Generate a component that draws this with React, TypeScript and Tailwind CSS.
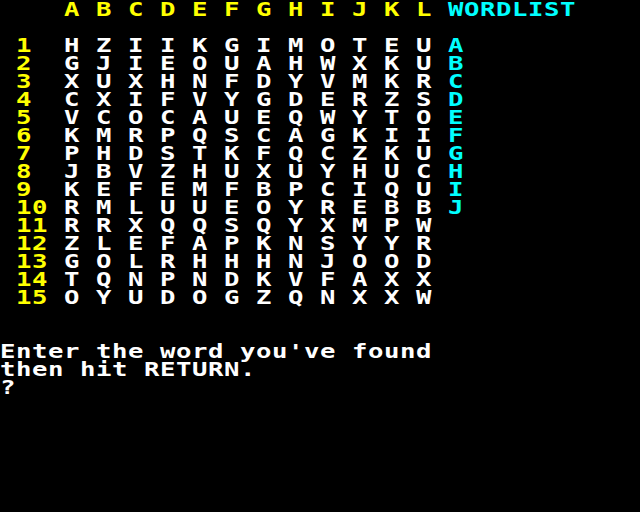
import React from "react";

const grid: string[] = [
  "HZIIKGIMOTEU",
  "GJIEOUAHWXKU",
  "XUXHNFDYVMKR",
  "CXIFVYGDERZS",
  "VCOCAUEQWYTO",
  "KMRPQSCAGKII",
  "PHDSTKFQCZKU",
  "JBVZHUXUYHUC",
  "KEFEMFBPCIQU",
  "RMLUUEOYREBB",
  "RRXQQSQYXMPW",
  "ZLEFAPKNSYYR",
  "GOLRHHHNJOOD",
  "TQNPNDKVFAXX",
  "OYUDOGZQNXXW",
];
const words = "ABCDEFGHIJ";

type Seg = { text: string; color: "y" | "c" | "w" };

const colorClass: Record<string, string> = {
  y: "text-[#ffff00]",
  c: "text-[#00ffff]",
  w: "text-[#ffffff]",
};

function Line({ segs }: { segs: Seg[] }) {
  const cells: { ch: string; color: string }[] = [];
  segs.forEach((s) => {
    for (const ch of s.text) cells.push({ ch, color: s.color });
  });
  return (
    <div className="flex h-[18px]">
      {cells.map((c, i) => (
        <span
          key={i}
          className={`inline-block w-[16px] shrink-0 text-center ${colorClass[c.color]}`}
        >
          {c.ch === " " ? "\u00a0" : (
            <span className="inline-block scale-x-[1.35]">{c.ch}</span>
          )}
        </span>
      ))}
    </div>
  );
}

export default function App() {
  const lines: Seg[][] = [];
  lines.push([
    { text: "    A B C D E F G H I J K L ", color: "y" },
    { text: "WORDLIST", color: "c" },
  ]);
  lines.push([]);
  grid.forEach((row, i) => {
    const num = String(i + 1).padEnd(3, " ");
    lines.push([
      { text: " " + num, color: "y" },
      { text: row.split("").join(" ") + " ", color: "w" },
      { text: words[i] ?? "", color: "c" },
    ]);
  });
  lines.push([]);
  lines.push([]);
  lines.push([{ text: "Enter the word you've found", color: "w" }]);
  lines.push([{ text: "then hit RETURN.", color: "w" }]);
  lines.push([{ text: "?", color: "w" }]);

  return (
    <div
      className="w-[640px] h-[512px] bg-black overflow-hidden font-bold text-[19px] leading-[18px]"
      style={{ fontFamily: '"DejaVu Sans Mono", "Liberation Mono", monospace' }}
    >
      <div>
        {lines.map((segs, i) => (
          <Line key={i} segs={segs} />
        ))}
      </div>
    </div>
  );
}
